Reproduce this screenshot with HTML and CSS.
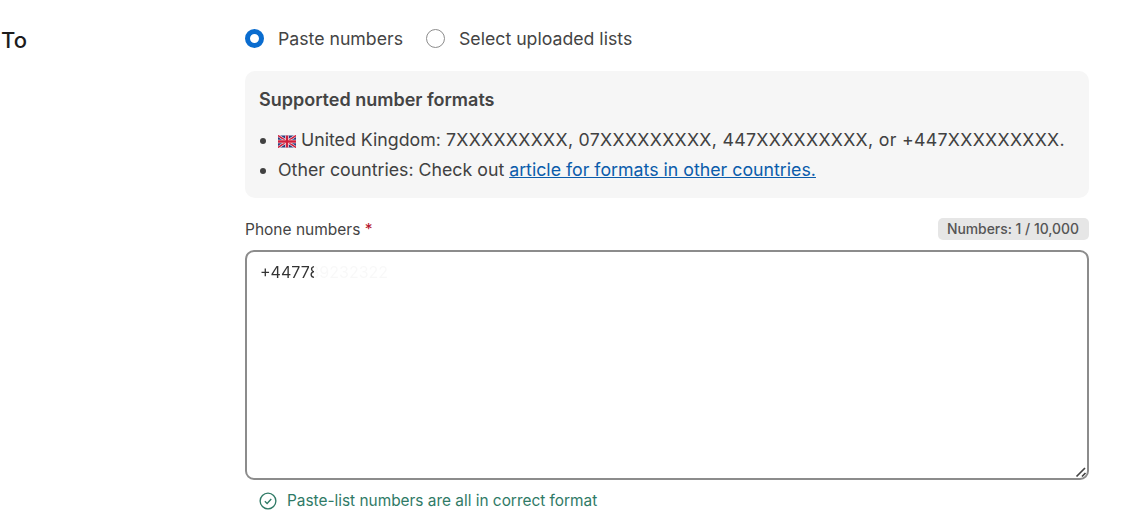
FILE: index.html
```html
<!DOCTYPE html>
<html lang="en">
<head>
    <meta charset="UTF-8">
    <title>Send message</title>
    <link rel="stylesheet" href="styles.css">
</head>
<body>
    <div class="row">
        <div class="row-label">To</div>
        <div class="row-body">
            <div class="radio-group">
                <label class="radio-item">
                    <span class="radio radio-on"></span> Paste numbers
                </label>
                <label class="radio-item">
                    <span class="radio"></span> Select uploaded lists
                </label>
            </div>

            <div class="info-box">
                <h4>Supported number formats</h4>
                <ul>
                    <li>
                        <svg class="flag" viewBox="0 0 60 40" aria-hidden="true">
                            <rect width="60" height="40" fill="#2b3a7c"/>
                            <path d="M0 0L60 40M60 0L0 40" stroke="#fff" stroke-width="9"/>
                            <path d="M0 0L60 40M60 0L0 40" stroke="#cf1f3c" stroke-width="5"/>
                            <path d="M30 0V40M0 20H60" stroke="#fff" stroke-width="12"/>
                            <path d="M30 0V40M0 20H60" stroke="#cf1f3c" stroke-width="8"/>
                        </svg>
                        United Kingdom: <span class="formats">7XXXXXXXXX, 07XXXXXXXXX, 447XXXXXXXXX, or +447XXXXXXXXX.</span>
                    </li>
                    <li>Other countries: Check out <a href="#">article for formats in other countries.</a></li>
                </ul>
            </div>

            <div class="field-head">
                <span class="field-label">Phone numbers <span class="required">*</span></span>
                <span class="counter">Numbers: 1 / 10,000</span>
            </div>
            <div class="numbers-box">
                <span class="number-text">+447789232322</span>
                <svg class="grip" viewBox="0 0 12 12" aria-hidden="true">
                    <path d="M1.5 10.5L10 2M7 10.5L10.5 7" fill="none" stroke="#444" stroke-width="1.7"/>
                </svg>
            </div>
            <div class="valid-msg">
                <svg class="check" viewBox="0 0 16 16" aria-hidden="true">
                    <circle cx="8" cy="8" r="7" fill="none" stroke="#2f7a66" stroke-width="1.2"/>
                    <path d="M5.2 8.3L7.2 10.2L10.9 6.3" fill="none" stroke="#2f7a66" stroke-width="1.2"/>
                </svg>
                Paste-list numbers are all in correct format
            </div>
        </div>
    </div>
</body>
</html>
```

FILE: styles.css
```css
/* General Styles */
body {
    margin: 0;
    font-family: Inter, "Liberation Sans", sans-serif;
    background-color: #fff;
    color: #414141;
}

.row {
    display: flex;
    padding-top: 25px;
}

.row-label {
    width: 245px;
    padding-left: 1px;
    padding-top: 2px;
    font-size: 22px;
    line-height: 26px;
    font-weight: 500;
    color: #1c1c1c;
    box-sizing: border-box;
}

.row-body {
    width: 844px;
}

/* Radios */
.radio-group {
    display: flex;
    align-items: center;
    gap: 23px;
    height: 26px;
}

.radio-item {
    display: flex;
    align-items: center;
    gap: 14px;
    font-size: 17.7px;
    color: #444;
}

.radio {
    width: 19px;
    height: 19px;
    border: 1px solid #8c8c8c;
    border-radius: 50%;
    box-sizing: border-box;
}

.radio-on {
    border: 5.5px solid #0a6ccf;
}

/* Info box */
.info-box {
    margin-top: 20px;
    height: 127px;
    padding: 17px 14px 0;
    background-color: #f6f6f6;
    border-radius: 10px;
    box-sizing: border-box;
}

.info-box h4 {
    margin: 0 0 13px;
    font-size: 18px;
    line-height: 24px;
    font-weight: 600;
    color: #444;
}

.info-box ul {
    margin: 0;
    padding-left: 19px;
}

.info-box li {
    font-size: 17.75px;
    line-height: 30px;
}

.info-box a {
    color: #0b5cab;
}

.formats {
    letter-spacing: 0.3px;
}

.flag {
    width: 18px;
    height: 13px;
    vertical-align: -2px;
}

/* Phone numbers */
.field-head {
    display: flex;
    justify-content: space-between;
    align-items: center;
    margin-top: 19px;
    height: 24px;
}

.field-label {
    font-size: 15.5px;
    color: #444;
}

.required {
    color: #b5122b;
}

.counter {
    padding: 2px 10px 2px 9px;
    font-size: 13.9px;
    line-height: 18px;
    font-weight: 500;
    color: #555;
    background-color: #e6e6e6;
    border-radius: 5px;
}

.numbers-box {
    position: relative;
    margin-top: 9px;
    height: 230px;
    padding: 9px 13px;
    font-size: 16px;
    line-height: 22px;
    color: #333;
    border: 2px solid #8c8c8c;
    border-radius: 9px;
    box-sizing: border-box;
}

/* digits after the cut are masked in the screenshot */
.number-text {
    color: transparent;
    background: linear-gradient(90deg, #333 54px, #f8f8f8 54px);
    -webkit-background-clip: text;
    background-clip: text;
}

.grip {
    position: absolute;
    right: 0;
    bottom: 0;
    width: 12px;
    height: 12px;
}

.valid-msg {
    display: flex;
    align-items: center;
    gap: 10px;
    margin-top: 10px;
    padding-left: 14px;
    font-size: 15.4px;
    line-height: 22px;
    color: #2f7a66;
}

.check {
    width: 18px;
    height: 18px;
}
```
